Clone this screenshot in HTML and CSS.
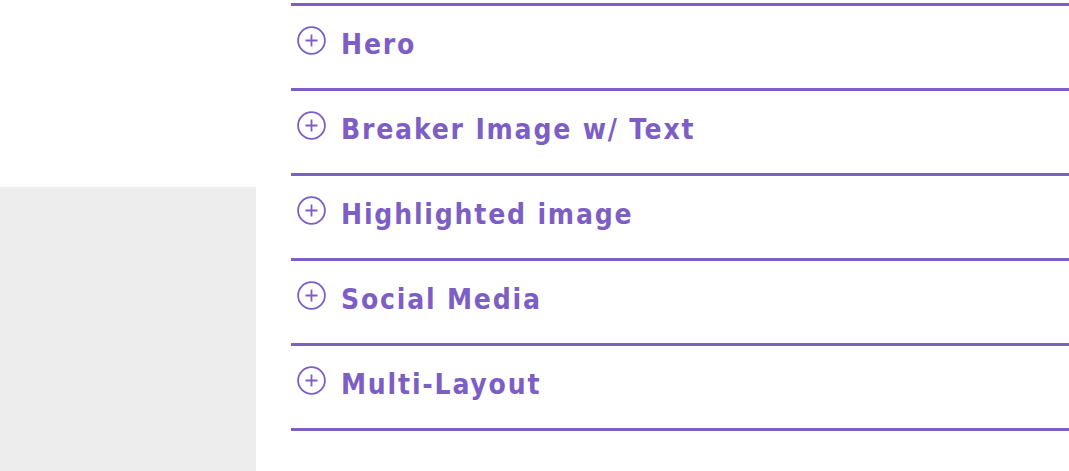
FILE: index.html
```html
<!DOCTYPE html>
<html>
<head>
<meta charset="utf-8">
<link rel="stylesheet" href="styles.css">
</head>
<body>
<div class="page">
  <aside class="side">
    <div class="side-top"></div>
    <div class="side-gray"></div>
  </aside>
  <main class="list">
    <div class="item"><svg class="ico" viewBox="0 0 29 29"><circle cx="14.5" cy="14.5" r="13.4" /><path d="M14.5 8.5v12M8.5 14.5h12"/></svg><span class="label">Hero</span></div>
    <div class="item"><svg class="ico" viewBox="0 0 29 29"><circle cx="14.5" cy="14.5" r="13.4" /><path d="M14.5 8.5v12M8.5 14.5h12"/></svg><span class="label">Breaker Image w/ Text</span></div>
    <div class="item"><svg class="ico" viewBox="0 0 29 29"><circle cx="14.5" cy="14.5" r="13.4" /><path d="M14.5 8.5v12M8.5 14.5h12"/></svg><span class="label">Highlighted image</span></div>
    <div class="item"><svg class="ico" viewBox="0 0 29 29"><circle cx="14.5" cy="14.5" r="13.4" /><path d="M14.5 8.5v12M8.5 14.5h12"/></svg><span class="label">Social Media</span></div>
    <div class="item"><svg class="ico" viewBox="0 0 29 29"><circle cx="14.5" cy="14.5" r="13.4" /><path d="M14.5 8.5v12M8.5 14.5h12"/></svg><span class="label">Multi-Layout</span></div>
  </main>
</div>
</body>
</html>
```
FILE: styles.css
```css
html, body { margin: 0; padding: 0; background: #fff; }
.page { display: flex; height: 471px; overflow: hidden; }
.side { width: 256px; flex: none; display: flex; flex-direction: column; margin-right: 35px; }
.side-top { height: 187px; }
.side-gray { flex: 1; background: #ededed; }
.list { flex: 1; padding-top: 3px; }
.item {
  height: 82px;
  border-top: 3px solid #7c5ec5;
  display: flex;
  align-items: flex-start;
}
.item:last-child { border-bottom: 3px solid #7c5ec5; }
.ico { width: 29px; height: 29px; margin: 20px 0 0 6px; fill: none; stroke: #7c5ec5; stroke-width: 1.8; flex: none; }
.label {
  margin: 23px 0 0 15px;
  font-family: "DejaVu Sans Condensed", "DejaVu Sans", sans-serif;
  font-weight: bold;
  font-size: 28px;
  line-height: 32px;
  letter-spacing: 1.8px;
  color: #7c5ec5;
}
```
